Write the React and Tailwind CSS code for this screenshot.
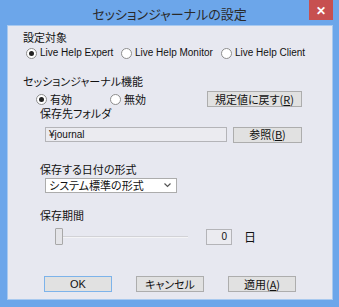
import React from 'react';

const jp = "font-['Noto_Sans_CJK_JP','Liberation_Sans',sans-serif] [font-feature-settings:'palt']";

function Radio({ checked, label, className = '' }) {
  return (
    <div className={`flex items-center ${className}`}>
      <span className="w-[11px] h-[11px] rounded-full border border-[#8d8d8d] bg-white flex items-center justify-center">
        {checked && <span className="w-[5px] h-[5px] rounded-full bg-[#222]" />}
      </span>
      <span className="ml-[3px] leading-none">{label}</span>
    </div>
  );
}

function Button({ children, className = '', primary = false }) {
  return (
    <div
      className={`h-[16px] flex items-center justify-center bg-[#e1e1e1] border ${
        primary ? 'border-[#7db3ea]' : 'border-[#adadad]'
      } text-[11px] leading-none ${className}`}
    >
      {children}
    </div>
  );
}

export default function App() {
  return (
    <div className={`w-[339px] h-[307px] bg-[#6ca6ea] flex flex-col text-[#111] text-[11px] leading-none ${jp}`}>
      <div className="relative h-[25px] flex items-center justify-center">
        <span className="text-[13px] text-[#2a2a2a] leading-none mt-[1px]">セッションジャーナルの設定</span>
        <div className="absolute right-[6px] top-0 w-[24px] h-[20px] bg-[#c75050] flex items-center justify-center text-white text-[12px] font-bold">
          ✕
        </div>
      </div>
      <div className="ml-[7px] w-[326px] h-[275px] bg-[#e7e8f0] border border-[#a8c9ef] flex flex-col">
        <div className="mt-[4px] ml-[15px] h-[14px] flex items-center">設定対象</div>
        <div className="mt-[2px] ml-[18px] h-[14px] flex items-center font-['Liberation_Sans',sans-serif] text-[10px]">
          <Radio checked label="Live Help Expert" className="w-[95px]" />
          <Radio label="Live Help Monitor" className="w-[100px]" />
          <Radio label="Live Help Client" />
        </div>
        <div className="mt-[14px] ml-[15px] h-[14px] flex items-center">セッションジャーナル機能</div>
        <div className="mt-[3px] ml-[28px] h-[16px] flex items-center">
          <Radio checked label="有効" className="w-[74px]" />
          <Radio label="無効" className="w-[97px]" />
          <Button className="w-[95px]">
            規定値に戻す(<span className="underline">R</span>)
          </Button>
        </div>
        <div className="mt-0 ml-[32px] h-[13px] flex items-center">保存先フォルダ</div>
        <div className="mt-[7px] ml-[37px] h-[15px] flex items-center">
          <div className="w-[182px] h-[15px] border border-[#b4b4b8] bg-[#ebebf0] flex items-center pl-[3px] font-['Liberation_Sans',sans-serif] text-[10px]">
            ¥journal
          </div>
          <Button className="ml-[6px] w-[69px] h-[15px]">
            参照(<span className="underline">B</span>)
          </Button>
        </div>
        <div className="mt-[20px] ml-[32px] h-[14px] flex items-center">保存する日付の形式</div>
        <div className="mt-[2px] ml-[37px] w-[132px] h-[15px] border border-[#acacac] bg-white flex items-center justify-between pl-[3px] pr-[5px]">
          <span>システム標準の形式</span>
          <svg width="7" height="5" viewBox="0 0 7 5">
            <path d="M0.5 0.5 L3.5 3.5 L6.5 0.5" fill="none" stroke="#555" strokeWidth="1.2" />
          </svg>
        </div>
        <div className="mt-[15px] ml-[32px] h-[14px] flex items-center">保存期間</div>
        <div className="mt-[6px] ml-[47px] h-[17px] flex items-center">
          <div className="w-[8px] h-[17px] bg-[#e4e4e8] border border-[#a8a8a8] rounded-[1px]" />
          <div className="w-[125px] h-[2px] border-t border-[#d2d2d6] bg-[#f4f4f6]" />
          <div className="ml-[18px] w-[26px] h-[16px] border border-[#b4b4b8] bg-[#ebebf0] flex items-center justify-end pr-[4px] font-['Liberation_Sans',sans-serif] text-[10px]">
            0
          </div>
          <span className="ml-[12px] text-[12px]">日</span>
        </div>
        <div className="mt-[31px] ml-[36px] flex gap-[24px]">
          <Button primary className="w-[68px] font-['Liberation_Sans',sans-serif] text-[10px]">OK</Button>
          <Button className="w-[68px]">キャンセル</Button>
          <Button className="w-[68px]">
            適用(<span className="underline">A</span>)
          </Button>
        </div>
      </div>
    </div>
  );
}
